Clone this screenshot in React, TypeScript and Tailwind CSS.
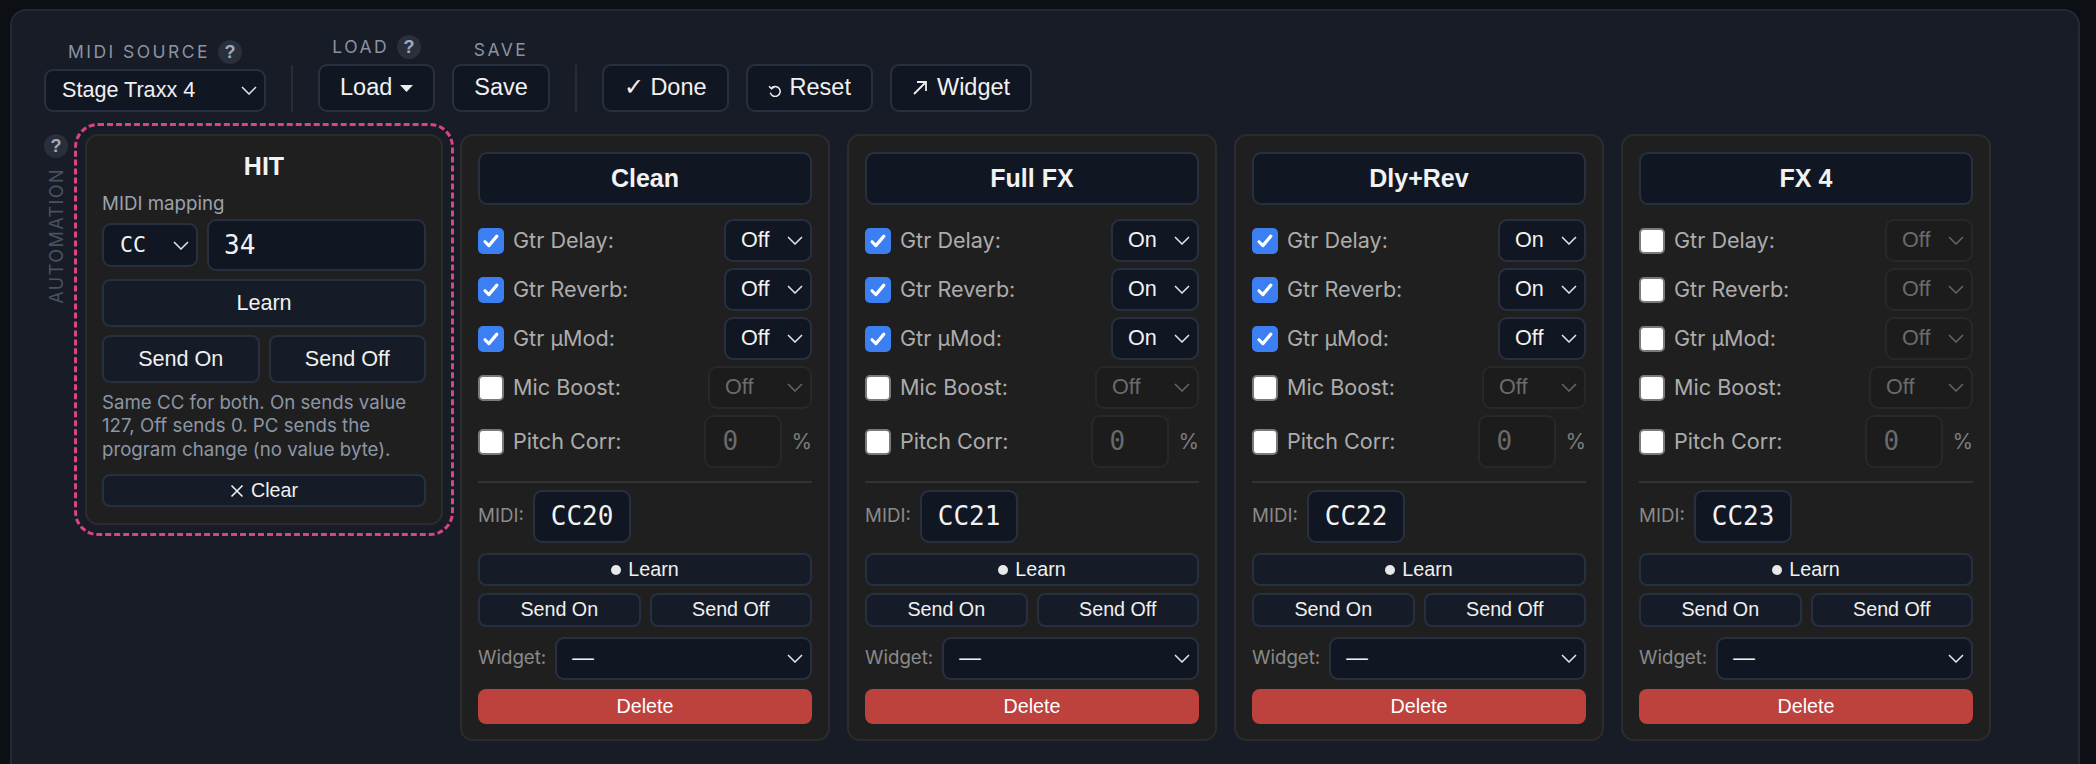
import React from 'react';

const sans = "font-['Liberation_Sans',Arial,sans-serif]";
const ui = "font-['Inter','Noto_Sans',sans-serif]";
const mono = "font-['DejaVu_Sans_Mono',monospace]";

type Fx = { label: string; checked: boolean; value: string };

const scenes: { title: string; cc: string; fx: Fx[] }[] = [
  {
    title: 'Clean',
    cc: 'CC20',
    fx: [
      { label: 'Gtr Delay:', checked: true, value: 'Off' },
      { label: 'Gtr Reverb:', checked: true, value: 'Off' },
      { label: 'Gtr µMod:', checked: true, value: 'Off' },
    ],
  },
  {
    title: 'Full FX',
    cc: 'CC21',
    fx: [
      { label: 'Gtr Delay:', checked: true, value: 'On' },
      { label: 'Gtr Reverb:', checked: true, value: 'On' },
      { label: 'Gtr µMod:', checked: true, value: 'On' },
    ],
  },
  {
    title: 'Dly+Rev',
    cc: 'CC22',
    fx: [
      { label: 'Gtr Delay:', checked: true, value: 'On' },
      { label: 'Gtr Reverb:', checked: true, value: 'On' },
      { label: 'Gtr µMod:', checked: true, value: 'Off' },
    ],
  },
  {
    title: 'FX 4',
    cc: 'CC23',
    fx: [
      { label: 'Gtr Delay:', checked: false, value: 'Off' },
      { label: 'Gtr Reverb:', checked: false, value: 'Off' },
      { label: 'Gtr µMod:', checked: false, value: 'Off' },
    ],
  },
];

function Chevron({ dim }: { dim?: boolean }) {
  return (
    <svg width="16" height="9" viewBox="0 0 16 9" fill="none" className={dim ? 'text-[#666666]' : 'text-[#e6e6e6]'}>
      <path d="M1 1l7 7 7-7" stroke="currentColor" strokeWidth="1.5" />
    </svg>
  );
}

function Help() {
  return (
    <span className={`flex h-[24px] w-[24px] shrink-0 items-center justify-center rounded-full bg-[#2a303b] text-[18px] font-bold text-[#a3abb8] ${sans}`}>
      ?
    </span>
  );
}

function Field({ label, help, rowClass, children }: { label: string; help?: boolean; rowClass: string; children: React.ReactNode }) {
  return (
    <div className="flex flex-col items-center gap-[5px]">
      <div className={`flex items-center gap-[8px] ${rowClass}`}>
        <span className={`text-[17.5px] uppercase tracking-[0.14em] text-[#8b93a3] ${ui}`}>{label}</span>
        {help && <Help />}
      </div>
      {children}
    </div>
  );
}

const tbBtn = `flex h-[48px] items-center rounded-[9px] border-2 border-[#283040] bg-[#111722] px-[20px] text-[23.5px] text-[#f1f1f1] ${sans}`;

function Toolbar() {
  return (
    <div className="flex items-end gap-[17px]">
      <Field label="MIDI Source" help rowClass="h-[24px]">
        <button className={`flex h-[43px] w-[222px] items-center justify-between rounded-[9px] border-2 border-[#283040] bg-[#111722] pl-[16px] pr-[7px] text-[21.6px] text-[#f1f1f1] ${sans}`}>
          Stage Traxx 4
          <Chevron />
        </button>
      </Field>
      <div className="mx-[8px] h-[47px] w-[2px] bg-[#262d39]" />
      <Field label="Load" help rowClass="h-[24px]">
        <button className={`${tbBtn} gap-[8px]`}>
          Load
          <svg width="13" height="7" viewBox="0 0 13 7">
            <path d="M0 0h13L6.5 7z" fill="#ededed" />
          </svg>
        </button>
      </Field>
      <Field label="Save" rowClass="h-[18px]">
        <button className={tbBtn}>Save</button>
      </Field>
      <div className="mx-[8px] h-[47px] w-[2px] bg-[#262d39]" />
      <button className={tbBtn}>✓ Done</button>
      <button className={`${tbBtn} gap-[8px]`}>
        <svg width="14" height="12" viewBox="0 0 14 12" fill="none" className="mt-[6px]">
          <path d="M3.2 3.4A5 5 0 1 1 2.3 7.6" stroke="#ededed" strokeWidth="1.5" />
          <path d="M1 1.2l2.6 2.6L6.4 1.6" stroke="#ededed" strokeWidth="1.5" />
        </svg>
        Reset
      </button>
      <button className={`${tbBtn} gap-[9px]`}>
        <svg width="16" height="16" viewBox="0 0 16 16" fill="none">
          <path d="M2 14L14 2M5 2h9v9" stroke="#ededed" strokeWidth="1.8" />
        </svg>
        Widget
      </button>
    </div>
  );
}

function Checkbox({ checked }: { checked: boolean }) {
  if (checked) {
    return (
      <span className="flex h-[26px] w-[26px] shrink-0 items-center justify-center rounded-[5px] bg-[#3b7ff2]">
        <svg width="20" height="20" viewBox="0 0 16 16" fill="none">
          <path d="M3.2 8.6l3.1 3.1 6.4-7.6" stroke="#ffffff" strokeWidth="2.5" strokeLinecap="round" strokeLinejoin="round" />
        </svg>
      </span>
    );
  }
  return <span className="h-[26px] w-[26px] shrink-0 rounded-[5px] border-2 border-[#7a7a7a] bg-white" />;
}

function FakeSelect({ value, disabled, wide }: { value: string; disabled: boolean; wide?: boolean }) {
  return (
    <div
      className={`flex h-[43px] items-center justify-between rounded-[9px] border-2 pl-[15px] pr-[7px] text-[21.6px] ${sans} ${wide ? 'w-[104px]' : 'w-[88px]'} ${
        disabled ? 'border-[#282828] bg-[#1c1c1c] text-[#6b6b6b]' : 'border-[#283040] bg-[#111722] text-[#f2f2f2]'
      }`}
    >
      {value}
      <Chevron dim={disabled} />
    </div>
  );
}

function FxRow({ label, checked, children }: { label: string; checked: boolean; children: React.ReactNode }) {
  return (
    <div className="flex items-center">
      <Checkbox checked={checked} />
      <span className={`ml-[9px] text-[21.6px] text-[#acacac] ${ui}`}>{label}</span>
      <div className="ml-auto flex items-center">{children}</div>
    </div>
  );
}

const cardBtn = `flex items-center justify-center rounded-[8px] border-2 border-[#263040] bg-[#161c27] text-[#f0f0f0] ${sans}`;

function SceneCard({ title, cc, fx }: { title: string; cc: string; fx: Fx[] }) {
  return (
    <div className="flex w-[370px] shrink-0 flex-col rounded-[13px] border-2 border-[#2c2c2c] bg-[#1f1f1f] px-[16px] pb-[15px] pt-[16px]">
      <button className={`h-[53px] w-full rounded-[9px] border-2 border-[#283040] bg-[#111722] text-[25px] font-bold text-[#f2f2f2] ${sans}`}>
        {title}
      </button>
      <div className="mt-[14px] flex flex-col gap-[6px]">
        {fx.map((f) => (
          <FxRow key={f.label} label={f.label} checked={f.checked}>
            <FakeSelect value={f.value} disabled={!f.checked} />
          </FxRow>
        ))}
        <FxRow label="Mic Boost:" checked={false}>
          <FakeSelect value="Off" disabled wide />
        </FxRow>
        <FxRow label="Pitch Corr:" checked={false}>
          <div className={`flex h-[53px] w-[78px] items-center rounded-[9px] border-2 border-[#282828] bg-[#1c1c1c] pl-[16px] text-[26px] text-[#6a6a6a] ${mono}`}>
            0
          </div>
          <span className={`ml-[9px] text-[21px] text-[#7d7d7d] ${ui}`}>%</span>
        </FxRow>
      </div>
      <div className="mt-[13px] h-[2px] bg-[#333333]" />
      <div className="mt-[7px] flex items-center gap-[9px]">
        <span className={`text-[18.7px] text-[#8a8a8a] ${ui}`}>MIDI:</span>
        <div className={`flex h-[53px] w-[98px] items-center rounded-[9px] border-2 border-[#283040] bg-[#111722] pl-[16px] text-[26px] text-[#f2f2f2] ${mono}`}>
          {cc}
        </div>
      </div>
      <button className={`${cardBtn} mt-[10px] h-[33px] gap-[7px] text-[19.7px]`}>
        <span className="h-[10px] w-[10px] rounded-full bg-[#e8e8e8]" />
        Learn
      </button>
      <div className="mt-[7px] grid grid-cols-2 gap-[9px]">
        <button className={`${cardBtn} h-[34px] text-[19.7px]`}>Send On</button>
        <button className={`${cardBtn} h-[34px] text-[19.7px]`}>Send Off</button>
      </div>
      <div className="mt-[10px] flex items-center gap-[9px]">
        <span className={`text-[18.7px] text-[#8a8a8a] ${ui}`}>Widget:</span>
        <div className={`flex h-[43px] flex-1 items-center justify-between rounded-[9px] border-2 border-[#283040] bg-[#111722] pl-[15px] pr-[7px] text-[21.6px] text-[#f2f2f2] ${sans}`}>
          —
          <Chevron />
        </div>
      </div>
      <button className={`mt-[9px] h-[35px] w-full rounded-[8px] bg-[#bd413c] text-[19.7px] text-white ${sans}`}>Delete</button>
    </div>
  );
}

function HitCard() {
  return (
    <div className="flex w-[358px] shrink-0 flex-col rounded-[13px] border-2 border-[#2c2c2c] bg-[#1f1f1f] px-[15px] pb-[16px] pt-[15px] outline-[3px] outline-dashed outline-[#d9467d] outline-offset-[8px]">
      <div className={`text-center text-[25px] font-bold leading-[30px] text-[#f2f2f2] ${sans}`}>HIT</div>
      <div className={`mt-[11px] text-[18.7px] leading-[24px] text-[#9aa2ae] ${ui}`}>MIDI mapping</div>
      <div className="mt-[3px] flex h-[52px] items-center gap-[9px]">
        <div className={`flex h-[44px] w-[96px] items-center justify-between rounded-[9px] border-2 border-[#283040] bg-[#111722] pl-[16px] pr-[7px] text-[21.6px] text-[#f2f2f2] ${mono}`}>
          CC
          <Chevron />
        </div>
        <div className={`flex h-[52px] flex-1 items-center rounded-[9px] border-2 border-[#283040] bg-[#111722] pl-[15px] text-[26px] text-[#f2f2f2] ${mono}`}>
          34
        </div>
      </div>
      <button className={`${cardBtn} mt-[8px] h-[48px] text-[21.6px]`}>Learn</button>
      <div className="mt-[8px] grid grid-cols-2 gap-[9px]">
        <button className={`${cardBtn} h-[48px] text-[21.6px]`}>Send On</button>
        <button className={`${cardBtn} h-[48px] text-[21.6px]`}>Send Off</button>
      </div>
      <p className={`mt-[8px] text-[18.7px] leading-[23.4px] text-[#8c96a6] ${ui}`}>
        Same CC for both. On sends value 127, Off sends 0. PC sends the program change (no value byte).
      </p>
      <button className={`${cardBtn} mt-[13px] h-[33px] gap-[7px] text-[19.7px]`}>
        <svg width="14" height="14" viewBox="0 0 14 14" fill="none">
          <path d="M1.5 1.5l11 11M12.5 1.5l-11 11" stroke="#f0f0f0" strokeWidth="1.6" />
        </svg>
        Clear
      </button>
    </div>
  );
}

export default function App() {
  return (
    <div className="h-screen overflow-hidden bg-[#0c0f14] pl-[10px] pr-[16px] pt-[9px]">
      <div className="rounded-[16px] border-2 border-[#232a36] bg-[#171c26] px-[32px] pb-[60px] pt-[24px]">
        <Toolbar />
        <div className="mt-[22px] flex items-start gap-[17px]">
          <div className="flex w-[24px] shrink-0 flex-col items-center gap-[10px]">
            <Help />
            <span className={`rotate-180 text-[18px] uppercase tracking-[0.08em] text-[#4a5262] [writing-mode:vertical-rl] ${ui}`}>
              Automation
            </span>
          </div>
          <HitCard />
          {scenes.map((s) => (
            <SceneCard key={s.title} title={s.title} cc={s.cc} fx={s.fx} />
          ))}
        </div>
      </div>
    </div>
  );
}
